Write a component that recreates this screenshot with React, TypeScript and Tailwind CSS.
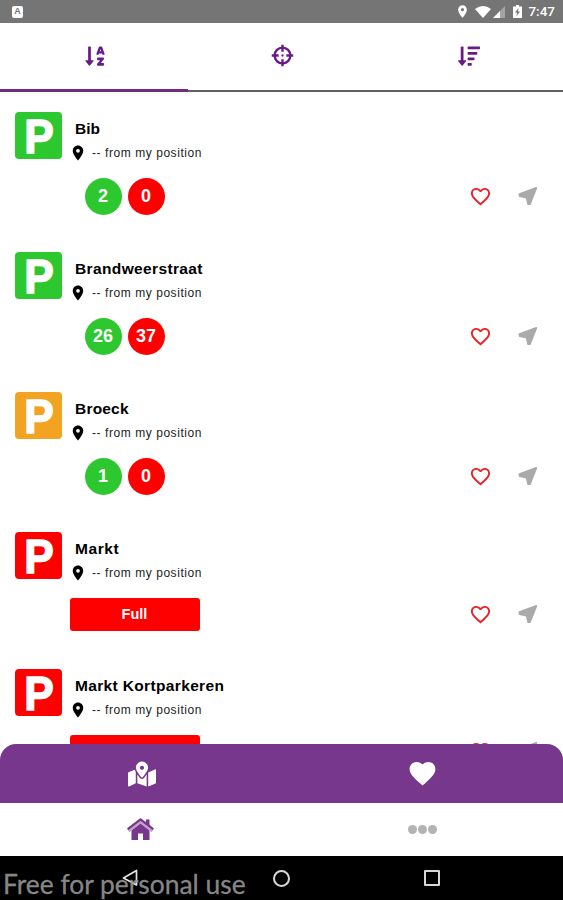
import React from "react";
import { FaSortAlphaDown, FaSortAmountDown, FaMapMarkedAlt } from "react-icons/fa";
import { MdLocationOn, MdFavorite, MdFavoriteBorder } from "react-icons/md";

type Spot = { name: string; tile: string; spacing: string; free?: number; taken?: number; label?: string };

const spots: Spot[] = [
  { name: "Bib", tile: "bg-[#2dc72f]", spacing: "tracking-normal", free: 2, taken: 0 },
  { name: "Brandweerstraat", tile: "bg-[#2dc72f]", spacing: "tracking-[0.37px]", free: 26, taken: 37 },
  { name: "Broeck", tile: "bg-[#f3a322]", spacing: "tracking-[0.2px]", free: 1, taken: 0 },
  { name: "Markt", tile: "bg-[#ff0000]", spacing: "tracking-[0.6px]", label: "Full" },
  { name: "Markt Kortparkeren", tile: "bg-[#ff0000]", spacing: "tracking-[0.35px]" },
];

function StatusBar() {
  return (
    <header className="flex h-[23px] shrink-0 items-center bg-[#757575] pr-2 pl-3 text-white">
      <span className="flex h-[12px] w-[11px] items-center justify-center rounded-[2px] bg-white text-[9px] leading-none font-bold text-[#757575]">A</span>
      <MdLocationOn className="ml-auto size-[15px]" />
      <svg viewBox="0 0 16 12" className="ml-[5px] h-[12px] w-[16px]" fill="currentColor">
        <path d="M0 3Q8-3 16 3L8 12Z" />
      </svg>
      <svg viewBox="0 0 12 12" className="ml-[2px] size-[12px]">
        <path d="M0 12 12 0V12Z" fill="#a5a5a5" />
        <path d="M0 12 7 5V12Z" fill="white" />
      </svg>
      <svg viewBox="0 0 9 13" className="ml-[8px] h-[13px] w-[9px]">
        <path d="M3 0H6V1.5H9V13H0V1.5H3Z" fill="white" />
        <path d="M5.5 3 2 7.5H4L3.5 11 7 6.5H5Z" fill="#757575" />
      </svg>
      <span className="ml-[6px] [font-family:'Roboto','Liberation_Sans',sans-serif] text-[13.5px] leading-none font-medium">7:47</span>
    </header>
  );
}

function Crosshair() {
  return (
    <svg viewBox="0 0 24 24" className="size-[23px]" fill="none" stroke="currentColor" strokeWidth="2.5">
      <circle cx="12" cy="12" r="8.2" />
      <path d="M12 .8V8M12 16V23.2M.8 12H8M16 12H23.2" />
      <circle cx="12" cy="12" r="1.2" fill="currentColor" stroke="none" />
    </svg>
  );
}

function House() {
  return (
    <svg viewBox="0 0 27 23" className="h-[23px] w-[27px]">
      <path d="M19 1.5H22.5V9H19Z" fill="#77378c" />
      <path d="M4.5 12 13.5 5 22.5 12V22H16V15.5H11V22H4.5Z" fill="#77378c" />
      <path d="M1.2 12.6 13.5 3.2 25.8 12.6" fill="none" stroke="#c3a2cd" strokeWidth="4" />
      <path d="M.8 11.2 13.5 1.5 26.2 11.2" fill="none" stroke="#77378c" strokeWidth="2.2" />
    </svg>
  );
}

function SpotRow({ spot }: { spot: Spot }) {
  const open = spot.free !== undefined;
  return (
    <article className={`flex shrink-0 pl-[14.5px] ${open ? "h-[140px]" : "h-[137px]"}`}>
      <div className={`flex h-[47px] w-[47px] shrink-0 items-center justify-center rounded-[4px] text-[48px] leading-[47px] font-bold text-white [-webkit-text-stroke:1.6px_white] ${spot.tile}`}>
        <span className="inline-block scale-x-[0.92] pt-px pl-[2px]">P</span>
      </div>
      <div className="flex w-full flex-col">
        <h2 className={`mt-[7px] ml-[13.5px] text-[15.5px] leading-[20px] font-bold whitespace-nowrap text-black ${spot.spacing}`}>{spot.name}</h2>
        <p className="mt-[6px] ml-[7.5px] flex h-[16px] items-center text-[12px] text-[#222]">
          <MdLocationOn className="size-[18px] text-black" />
          <span className="ml-[5px] tracking-[0.56px] whitespace-nowrap">-- from my position</span>
        </p>
        <div className={`mt-[17px] flex items-center ${open ? "h-[37px]" : "h-[33px]"}`}>
          {open ? (
            <div className="ml-[23px] flex gap-[6px] text-[18px] font-bold text-white">
              <span className="flex size-[37px] items-center justify-center rounded-full bg-[#2dc72f]">{spot.free}</span>
              <span className="flex size-[37px] items-center justify-center rounded-full bg-[#ff0000]">{spot.taken}</span>
            </div>
          ) : (
            <span className="ml-[8px] flex h-[33px] w-[130px] items-center justify-center rounded-[3px] bg-[#ff0000] pt-px text-[14.5px] font-bold text-white">{spot.label}</span>
          )}
          <MdFavoriteBorder className="ml-auto size-[23px] text-[#ed2024]" />
          <svg viewBox="0 0 20 20" className="mr-[25px] mb-[2px] ml-[26px] size-[20px]">
            <path d="M18.3 1.8 1.4 8.2 1.7 10 8.6 11.6 10.2 18.2 12 18Z" fill="#aaa" stroke="#aaa" strokeWidth="1.8" strokeLinejoin="round" />
          </svg>
        </div>
      </div>
    </article>
  );
}

export default function App() {
  return (
    <div className="relative flex h-[900px] w-[563px] flex-col overflow-hidden bg-white font-['Liberation_Sans',sans-serif]">
      <StatusBar />
      <nav className="grid h-[69px] shrink-0 grid-cols-3 border-b-2 border-[#606060] text-[#681b87]">
        <span className="-mb-[2px] flex items-center justify-center border-b-[3px] border-[#702c85] pl-[2px]"><FaSortAlphaDown className="size-[22px]" /></span>
        <span className="flex items-center justify-center pb-[2px] pl-[2px]"><Crosshair /></span>
        <span className="flex items-center justify-center pb-[2px]"><FaSortAmountDown className="size-[22px]" /></span>
      </nav>
      <main className="flex h-[652px] shrink-0 flex-col overflow-hidden pt-[20px]">
        {spots.map((spot) => <SpotRow key={spot.name} spot={spot} />)}
      </main>
      <nav className="grid h-[59px] shrink-0 grid-cols-2 rounded-t-[16px] bg-[#77378c] text-white">
        <span className="flex items-center justify-center pl-[2px]"><FaMapMarkedAlt className="size-[28px]" /></span>
        <span className="flex items-center justify-center"><MdFavorite className="size-[31px]" /></span>
      </nav>
      <nav className="grid h-[53px] shrink-0 grid-cols-2">
        <span className="flex items-center justify-center">
          <House />
        </span>
        <span className="flex items-center justify-center gap-[1px]">
          <i className="size-[9px] rounded-full bg-[#b3b3b3]" />
          <i className="size-[9px] rounded-full bg-[#b3b3b3]" />
          <i className="size-[9px] rounded-full bg-[#b3b3b3]" />
        </span>
      </nav>
      <footer className="relative flex grow items-center bg-black">
        <svg viewBox="0 0 16 18" className="ml-[122px] h-[18px] w-[16px]" fill="none" stroke="#e4e4e4" strokeWidth="1.7">
          <path d="M14.5 1.5V16L1.5 9Z" strokeLinejoin="round" />
        </svg>
        <span className="ml-[135px] size-[17px] rounded-full border-2 border-[#d8d8d8]" />
        <span className="ml-[134px] size-[16px] rounded-[1px] border-2 border-[#d8d8d8]" />
        <span className="absolute top-[12px] left-[3px] [font-family:'Lato',sans-serif] text-[26.4px] leading-[32px] whitespace-nowrap text-[#999]/90 [-webkit-text-stroke:0.3px_#8a8a8a]">Free for personal use</span>
      </footer>
    </div>
  );
}
